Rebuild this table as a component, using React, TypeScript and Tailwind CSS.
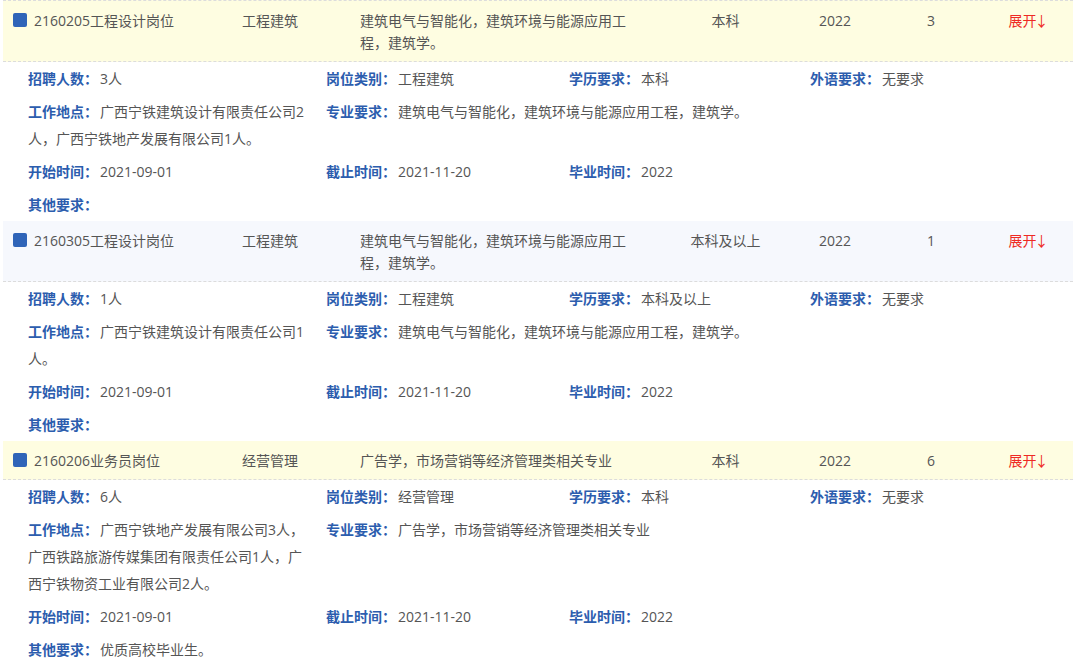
import React from "react";

type Job = {
  title: string;
  category: string;
  major: string;
  degree: string;
  year: string;
  count: string;
  place: string;
  other: string;
  bg: string;
};

const jobs: Job[] = [
  {
    title: "2160205工程设计岗位",
    category: "工程建筑",
    major: "建筑电气与智能化，建筑环境与能源应用工程，建筑学。",
    degree: "本科",
    year: "2022",
    count: "3",
    place: "广西宁铁建筑设计有限责任公司2人，广西宁铁地产发展有限公司1人。",
    other: "",
    bg: "bg-[#fefde1]",
  },
  {
    title: "2160305工程设计岗位",
    category: "工程建筑",
    major: "建筑电气与智能化，建筑环境与能源应用工程，建筑学。",
    degree: "本科及以上",
    year: "2022",
    count: "1",
    place: "广西宁铁建筑设计有限责任公司1人。",
    other: "",
    bg: "bg-[#f6f8fd]",
  },
  {
    title: "2160206业务员岗位",
    category: "经营管理",
    major: "广告学，市场营销等经济管理类相关专业",
    degree: "本科",
    year: "2022",
    count: "6",
    place: "广西宁铁地产发展有限公司3人，广西铁路旅游传媒集团有限责任公司1人，广西宁铁物资工业有限公司2人。",
    other: "优质高校毕业生。",
    bg: "bg-[#fefde1]",
  },
];

function Field({ label, value, className = "" }: { label: string; value: string; className?: string }) {
  return (
    <div className={`py-[3px] leading-[27px] text-[#555] ${className}`}>
      <b className="font-bold text-[#2c5dae] mr-[2px]">{label}：</b>
      {value}
    </div>
  );
}

function JobRow({ job, first }: { job: Job; first: boolean }) {
  return (
    <div>
      {/* summary line */}
      <div
        className={`flex ${job.bg} pt-[9px] pb-[7px] leading-[22px] text-[#555] border-b border-dashed border-[#dcdcdc] ${
          first ? "border-t" : ""
        }`}
      >
        <div className="w-[239px] pl-[10px] flex items-start gap-[7px]">
          <span className="mt-[3px] w-[14px] h-[14px] rounded-[2px] bg-[#2f64b8] shrink-0" />
          <span>{job.title}</span>
        </div>
        <div className="w-[118px]">{job.category}</div>
        <div className="w-[303px] pr-[33px]">{job.major}</div>
        <div className="w-[125px] text-center">{job.degree}</div>
        <div className="w-[94px] text-center">{job.year}</div>
        <div className="w-[98px] text-center">{job.count}</div>
        <div className="flex-1 text-center text-[#ee2a24]">
          展开<span className="inline-block w-[10px] -ml-[2px] text-left">↓</span>
        </div>
      </div>

      {/* detail table */}
      <div className="grid grid-cols-[298px_243px_241px_1fr] pl-[25px]">
        <Field label="招聘人数" value={job.count + "人"} />
        <Field label="岗位类别" value={job.category} />
        <Field label="学历要求" value={job.degree} />
        <Field label="外语要求" value="无要求" />
        <Field label="工作地点" value={job.place} className="pr-[12px]" />
        <Field label="专业要求" value={job.major} className="col-span-3" />
        <Field label="开始时间" value="2021-09-01" />
        <Field label="截止时间" value="2021-11-20" />
        <Field label="毕业时间" value={job.year} />
        <div />
        <Field label="其他要求" value={job.other} className="col-span-4" />
      </div>
    </div>
  );
}

export default function App() {
  return (
    <div
      className="w-[1080px] h-[659px] overflow-hidden bg-white text-[14px]"
      style={{ fontFamily: '"Open Sans", "Noto Sans CJK SC", sans-serif' }}
    >
      <div className="ml-[3px] w-[1070px]">
        {jobs.map((job, i) => (
          <JobRow key={job.title} job={job} first={i === 0} />
        ))}
      </div>
    </div>
  );
}
